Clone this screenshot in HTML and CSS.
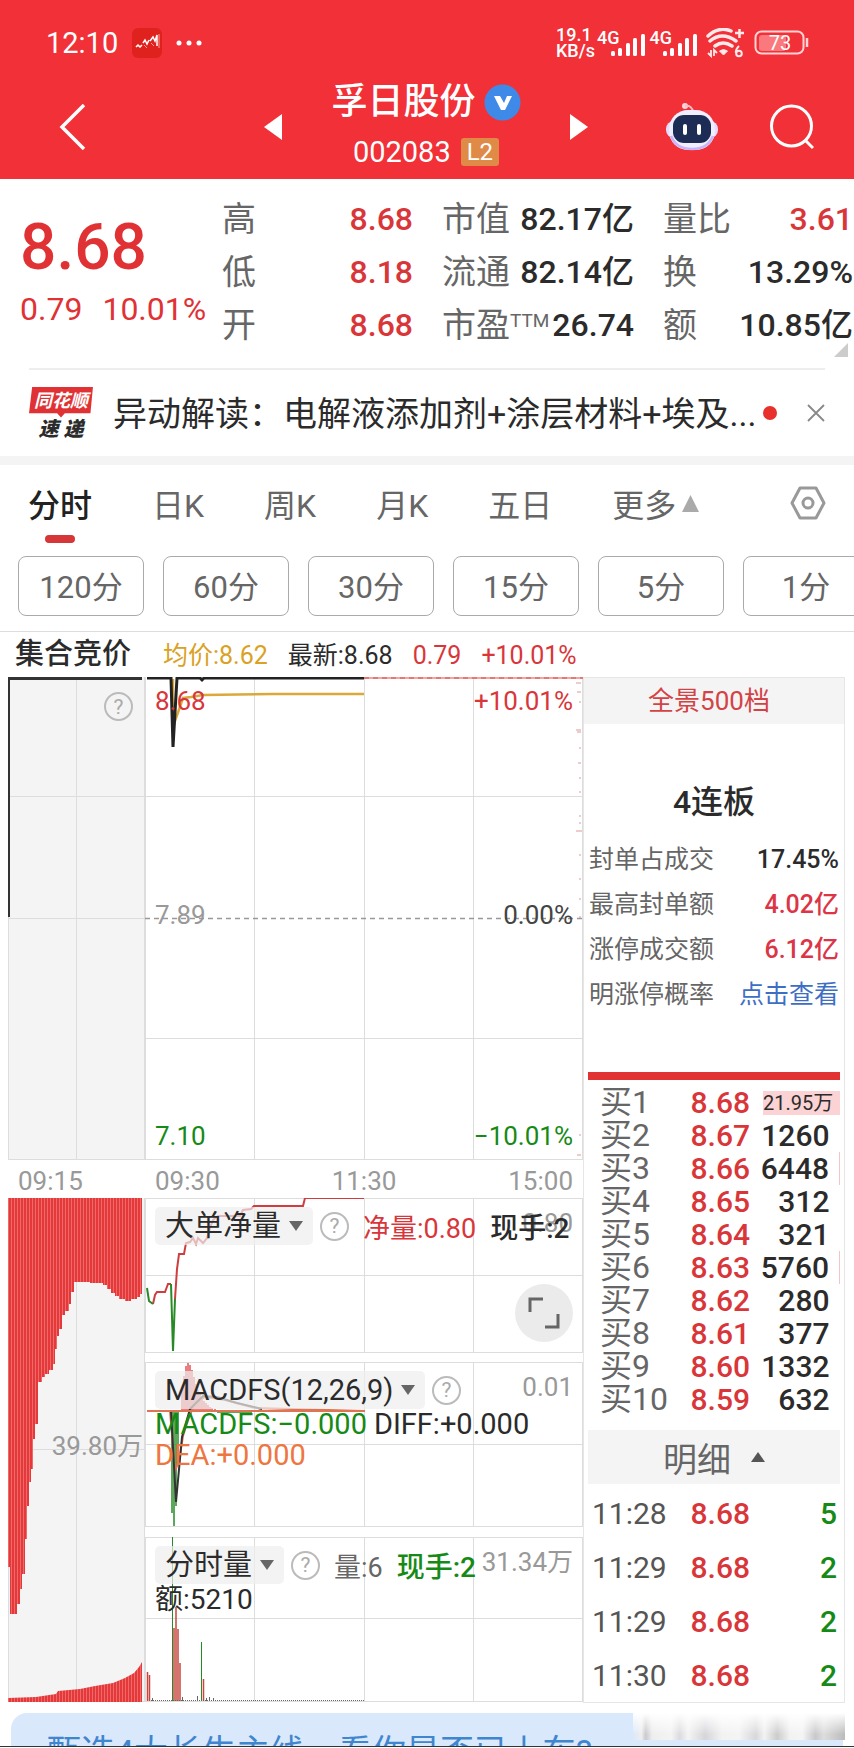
FILE: index.html
```html
<!DOCTYPE html>
<html lang="zh-CN">

<head>
    <meta charset="UTF-8">
    <meta name="viewport" content="width=device-width, initial-scale=1.0">
    <title>孚日股份 002083</title>
    <link rel="stylesheet" href="styles.css">
</head>

<body>
    <header class="top">
        <div class="status">
            <span class="clock">12:10</span>
            <svg class="app" width="30" height="30" viewBox="0 0 30 30">
                <rect width="30" height="30" rx="6" fill="#e0221f" />
                <path d="M4 19l2-2 2 2 2-2M11 15l2-3 2 4 2-4M18 13l3-4 2 4 2-6v11" fill="none" stroke="#fff" stroke-width="1.500" />
                <path d="M12 17l3 3M19 15l3 3M27 6v14" stroke="#ff9d90" stroke-width="1" />
            </svg>
            <svg width="26" height="6" viewBox="0 0 26 6" fill="#fff">
                <circle cx="3" cy="3" r="2.500" />
                <circle cx="13" cy="3" r="2.500" />
                <circle cx="23" cy="3" r="2.500" />
            </svg>
            <div class="status-right">
                <span class="speed">19.1<br>KB/s</span>
                <span class="signal">4G
                    <svg width="35" height="24" viewBox="0 0 35 24" fill="#fff">
                        <rect x="0" y="18" width="4" height="5" rx="1.500" />
                        <rect x="7" y="15" width="4" height="8" rx="1.500" />
                        <rect x="15" y="10" width="4" height="13" rx="1.500" />
                        <rect x="22" y="5" width="4" height="18" rx="1.500" />
                        <rect x="30" y="1" width="4" height="22" rx="1.500" />
                    </svg>
                </span>
                <span class="signal">4G
                    <svg width="35" height="24" viewBox="0 0 35 24" fill="#fff">
                        <rect x="0" y="18" width="4" height="5" rx="1.500" />
                        <rect x="7" y="15" width="4" height="8" rx="1.500" />
                        <rect x="15" y="10" width="4" height="13" rx="1.500" />
                        <rect x="22" y="5" width="4" height="18" rx="1.500" />
                        <rect x="30" y="1" width="4" height="22" rx="1.500" />
                    </svg>
                </span>
                <svg class="wifi" width="38" height="30" viewBox="0 0 38 30" fill="none" stroke="#ffe9ea" stroke-width="3.500">
                    <path d="M2 8Q13-2 25 3M4 13q12-10 26 0M9 18q8-6 17 0" stroke-linecap="round" />
                    <path d="M17.500 27l-4-4q4-3 8 0z" fill="#ffe9ea" stroke-width="1" />
                    <path d="M29 5h9M33.500 1v9" stroke-width="2.500" />
                    <path d="M5 22v6l-3-3M8 28v-6l3 3" stroke-width="1.800" />
                    <path d="M33 18q-4 4-3 7" stroke-width="2" />
                    <circle cx="33" cy="25.500" r="2.800" stroke-width="2" />
                </svg>
                <svg class="battery" width="56" height="26" viewBox="0 0 56 26">
                    <rect x="5" y="5" width="27" height="16" rx="3" fill="#f9797d" />
                    <rect x="1.500" y="1.500" width="48" height="22" rx="6" fill="none" stroke="#ffd3d5" stroke-width="2" />
                    <path d="M53 8v9" stroke="#ffd3d5" stroke-width="2.500" />
                    <text x="26" y="20" text-anchor="middle" font-size="20" fill="#fff">73</text>
                </svg>
            </div>
        </div>
        <nav class="bar">
            <button class="icon" aria-label="返回">
                <svg width="28" height="46" viewBox="0 0 28 46" fill="none" stroke="#fff" stroke-width="3.500">
                    <path d="M26 1L4 23l22 22" />
                </svg>
            </button>
            <button class="icon prev" aria-label="上一只">
                <svg width="18" height="26" viewBox="0 0 18 26" fill="#fff"><path d="M18 0v26L0 13z" /></svg>
            </button>
            <div class="title">
                <h1>孚日股份
                    <svg width="37" height="37" viewBox="0 0 37 37">
                        <circle cx="18.500" cy="18.500" r="18" fill="#3f8ae8" />
                        <path d="M10 12h6l4 7 3-7h5l-7 14h-4z" fill="#fff" />
                    </svg>
                </h1>
                <p>002083 <span class="tag">L2</span></p>
            </div>
            <button class="icon next" aria-label="下一只">
                <svg width="18" height="26" viewBox="0 0 18 26" fill="#fff"><path d="M0 0v26l18-13z" /></svg>
            </button>
            <button class="icon robot" aria-label="智能助手">
                <svg width="52" height="50" viewBox="0 0 52 50">
                    <circle cx="19" cy="4" r="3" fill="#ffd5dc" />
                    <path d="M19 4q7-1 8 6" fill="none" stroke="#ffb9c4" stroke-width="2" />
                    <rect x="0" y="19" width="52" height="17" rx="8" fill="#e3dcff" />
                    <rect x="3" y="8" width="46" height="40" rx="19" fill="#f0eeff" />
                    <path d="M5 34q5 13 21 13t21-13" fill="none" stroke="#c8b5f7" stroke-width="2.500" />
                    <rect x="7" y="13" width="38" height="28" rx="11" fill="#1d2c55" />
                    <rect x="17" y="22" width="4" height="11" rx="2" fill="#fff" />
                    <rect x="31" y="22" width="4" height="11" rx="2" fill="#fff" />
                </svg>
            </button>
            <button class="icon" aria-label="搜索">
                <svg width="44" height="46" viewBox="0 0 44 46" fill="none" stroke="#fff" stroke-width="3">
                    <circle cx="21.500" cy="22" r="20" />
                    <path d="M35 36l8 8" />
                </svg>
            </button>
        </nav>
    </header>

    <section class="quote">
        <div class="price">
            <strong>8.68</strong>
            <p><span>0.79</span><span>10.01%</span></p>
        </div>
        <dl class="stats">
            <div><dt>高</dt><dd class="red">8.68</dd></div>
            <div><dt>低</dt><dd class="red">8.18</dd></div>
            <div><dt>开</dt><dd class="red">8.68</dd></div>
        </dl>
        <dl class="stats">
            <div><dt>市值</dt><dd>82.17亿</dd></div>
            <div><dt>流通</dt><dd>82.14亿</dd></div>
            <div><dt>市盈<sup>TTM</sup></dt><dd>26.74</dd></div>
        </dl>
        <dl class="stats">
            <div><dt>量比</dt><dd class="red">3.61</dd></div>
            <div><dt>换</dt><dd>13.29%</dd></div>
            <div><dt>额</dt><dd>10.85亿</dd></div>
        </dl>
        <svg class="corner" width="14" height="14" viewBox="0 0 14 14"><path d="M14 0v14H0z" fill="#ccc" /></svg>
    </section>

    <section class="notice">
        <div class="brand"><b>同花顺</b><i>速 递</i></div>
        <a href="#">异动解读：电解液添加剂+涂层材料+埃及...</a>
        <span class="dot"></span>
        <button class="icon" aria-label="关闭">
            <svg width="18" height="18" viewBox="0 0 18 18" stroke="#888" stroke-width="1.800"><path d="M1 1l16 16M17 1L1 17" /></svg>
        </button>
    </section>

    <nav class="tabs">
        <button class="active">分时</button>
        <button>日K</button>
        <button>周K</button>
        <button>月K</button>
        <button>五日</button>
        <button>更多<svg width="17" height="17" viewBox="0 0 17 17"><path d="M8.500 0L17 17H0z" fill="#aaa" /></svg></button>
        <button class="setting" aria-label="设置">
            <svg width="36" height="34" viewBox="0 0 36 34" fill="none" stroke="#999" stroke-width="3">
                <path d="M10 2h16l8 15-8 15H10L2 17z" stroke-linejoin="round" />
                <circle cx="18" cy="17" r="5" />
            </svg>
        </button>
    </nav>
    <div class="periods">
        <button>120分</button>
        <button>60分</button>
        <button>30分</button>
        <button>15分</button>
        <button>5分</button>
        <button>1分</button>
    </div>

    <main>
        <div class="summary">
            <b>集合竞价</b>
            <span class="gold">均价:8.62</span>
            <span>最新:8.68</span>
            <span class="red">0.79</span>
            <span class="red">+10.01%</span>
        </div>
        <div class="board">
            <!-- call auction -->
            <div class="auction">
                <div class="plot tall">
                    <svg class="draw" viewBox="0 0 137 483" preserveAspectRatio="none">
                        <path class="grid" d="M.500 0v483M68.500 0v483M136.500 0v483M0 119.500h137M0 241.500h137M0 482.500h137" />
                        <path d="M1 240V1" stroke="#333" stroke-width="2" />
                        <path d="M0 1h134" stroke="#333" stroke-width="4" />
                    </svg>
                    <button class="help" aria-label="说明">?</button>
                </div>
                <div class="times"><span>09:15</span></div>
                <div class="plot deep">
                    <svg class="draw" viewBox="0 0 137 504" preserveAspectRatio="none">
                        <defs>
                            <pattern id="stripe" width="3" height="10" patternUnits="userSpaceOnUse">
                                <rect width="3" height="10" fill="#e4383a" />
                                <rect width="1" height="10" fill="#ee6a68" />
                            </pattern>
                        </defs>
                        <path class="grid" d="M.500 0v504M68.500 0v504M136.500 0v504M0 251.500h137M0 503.500h137" />
                        <path fill="url(#stripe)" d="M0 0H134V96H132V99H129V101H123V103H117V101H111V98H107V95H103V91H99V87H95V85H82V84H66V94H63V106H61V113H57V117H54V131H51V138H49V151H47V166H45V172H41V176H37V179H34V184H30V226H27V241H25V271H23V284H21V308H19V341H17V376H14V391H12V406H9V416H2V369H0z" />
                        <path fill="url(#stripe)" d="M0 504V500L28 499 48 496 50 493 72 491 87 488 105 485 117 480 126 475 131 469 134 464V504z" />
                    </svg>
                    <span class="peak">39.80万</span>
                </div>
            </div>

            <!-- minute charts -->
            <div class="minute">
                <div class="plot tall">
                    <svg class="draw" viewBox="0 0 438 483" preserveAspectRatio="none">
                        <path class="grid" d="M.500 0v483M109.500 0v483M219.500 0v483M328.500 0v483M437.500 0v483M0 119.500h438M0 361.500h438M0 482.500h438" />
                        <path d="M0 241.500h438" stroke="#999" stroke-width="1.500" stroke-dasharray="5 4" />
                        <path d="M219 1h219" stroke="#f3a5a0" stroke-width="2" />
                        <path d="M219 1h219" stroke="#d94a48" stroke-dasharray="5 4" />
                        <path d="M28 2v50l2-8 8-23 8-1 12-2 70-1h91" fill="none" stroke="#dba93a" stroke-width="2.500" />
                        <path d="M2 1h24l2 69 4-69h23l2 2 2-2h160" fill="none" stroke="#222" stroke-width="3" />
                        <path d="M431 6h5M432 15h4M434 25h2M431 53h5M432 55h4M434 71h2M433 86h3M434 101h2M434 115h2M434 139h2M434 146h2M431 154h6M434 178h2M434 202h2M434 222h2M434 240h2M434 458h2M432 478h4" stroke="#d99" />
                    </svg>
                    <div class="axis">
                        <p class="red"><span>8.68</span><span>+10.01%</span></p>
                        <p class="base"><span>7.89</span><span>0.00%</span></p>
                        <p class="green"><span>7.10</span><span>−10.01%</span></p>
                    </div>
                </div>
                <div class="times"><span>09:30</span><span>11:30</span><span>15:00</span></div>

                <div class="plot flow">
                    <svg class="draw" viewBox="0 0 438 155" preserveAspectRatio="none">
                        <path class="grid" d="M.500 0v155M109.500 0v155M219.500 0v155M328.500 0v155M437.500 0v155M0 .500h438M0 77.500h438M0 154.500h438" />
                        <g fill="none" stroke="#cf3d3f" stroke-width="2">
                            <path d="M8 106l2-9 2-3h8l3-8h3M30 101l2-30 2-15h5l2-11 4-1 3-4 3 6 2-6 5 5 4-5 3-10 3-8 5-4h22l3-6 8-1 3-3h49l2-8h59" />
                            <path d="M2 90l2 13 4 3M26 86l2 67 2-52" stroke="#278a27" />
                        </g>
                    </svg>
                    <span class="scale">0.80</span>
                    <div class="line">
                        <label class="pick"><select aria-label="指标"><option>大单净量</option></select></label>
                        <button class="help" aria-label="说明">?</button>
                        <span class="red">净量:0.80</span>
                        <span class="now">现手:2</span>
                    </div>
                    <button class="expand" aria-label="全屏">
                        <svg width="32" height="32" viewBox="0 0 32 32" fill="none" stroke="#666" stroke-width="3"><path d="M2 15V2h13M17 30h13V17" /></svg>
                    </button>
                </div>

                <div class="plot">
                    <svg class="draw" viewBox="0 0 438 165" preserveAspectRatio="none">
                        <path class="grid" d="M.500 0v165M109.500 0v165M219.500 0v165M328.500 0v165M437.500 0v165M0 .500h438M0 82.500h438M0 164.500h438" />
                        <path d="M37 49V26M39 49V14M41 49V4M43 49V1M45 49V3M47 49V8M49 49V15M51 49V22M53 49V28M55 49V32M57 49V35M59 49V39M61 49V41M63 49V43M65 49V45M67 49V46M70 49v-2" stroke="#e25255" stroke-width="1.500" />
                        <path d="M27 49v102M29 49v115M31 49v95M33 49v40M72 50h35" stroke="#278a27" stroke-width="1.500" />
                        <path d="M2 49h23l5 60 4-10 4-25 6-19 6-14 10-6 20 3 30 8 110 3" fill="none" stroke="#df7454" stroke-width="2" />
                        <path d="M26 49l5 91 6-65 8-28 13-13 14 1 20 6 25 6" fill="none" stroke="#333" stroke-width="2" />
                        <path d="M2 49h217" stroke="#df7454" stroke-width="2" />
                    </svg>
                    <span class="scale">0.01</span>
                    <div class="line">
                        <label class="pick"><select aria-label="指标"><option>MACDFS(12,26,9)</option></select></label>
                        <button class="help" aria-label="说明">?</button>
                    </div>
                    <p class="values"><span class="green">MACDFS:−0.000</span> <span>DIFF:+0.000</span> <span class="orange">DEA:+0.000</span></p>
                </div>

                <div class="plot last">
                    <svg class="draw" viewBox="0 0 438 165" preserveAspectRatio="none">
                        <path class="grid" d="M.500 0v165M109.500 0v165M219.500 0v165M328.500 0v165M437.500 0v165M0 .500h438M0 81.500h438M0 164.500h438" />
                        <path d="M2.500 164v-29M4.500 164v-26M29 164V91M31 164V70M33 164V92M35 164v-38M58.500 164v-22" stroke="#c8453f" stroke-width="1.500" />
                        <path d="M27.500 164V0M56.500 164v-59" stroke="#278a27" />
                        <path d="M6 163.500h213" stroke="#666" stroke-dasharray="1 1" />
                        <path d="M7.500 164v-3M37.500 164v-4M52.500 164v-5M61.500 164v-3M64.500 164v-4M68.500 164v-3" stroke="#666" />
                    </svg>
                    <span class="scale">31.34万</span>
                    <div class="line">
                        <label class="pick"><select aria-label="指标"><option>分时量</option></select></label>
                        <button class="help" aria-label="说明">?</button>
                        <span class="grey">量:6</span>
                        <span class="green now">现手:2</span>
                    </div>
                    <p class="values">额:5210</p>
                </div>
            </div>

            <!-- order book -->
            <aside class="side">
                <button class="depth">全景500档</button>
                <div class="limit">
                    <h2>4连板</h2>
                    <dl>
                        <div><dt>封单占成交</dt><dd>17.45%</dd></div>
                        <div><dt>最高封单额</dt><dd class="rose">4.02亿</dd></div>
                        <div><dt>涨停成交额</dt><dd class="rose">6.12亿</dd></div>
                        <div><dt>明涨停概率</dt><dd><a href="#">点击查看</a></dd></div>
                    </dl>
                </div>
                <table class="book">
                    <tr><th>买1</th><td class="red">8.68</td><td class="first"><span>21.95万</span></td></tr>
                    <tr><th>买2</th><td class="red">8.67</td><td>1260</td></tr>
                    <tr><th>买3</th><td class="red">8.66</td><td class="mark">6448</td></tr>
                    <tr><th>买4</th><td class="red">8.65</td><td>312</td></tr>
                    <tr><th>买5</th><td class="red">8.64</td><td>321</td></tr>
                    <tr><th>买6</th><td class="red">8.63</td><td class="mark">5760</td></tr>
                    <tr><th>买7</th><td class="red">8.62</td><td>280</td></tr>
                    <tr><th>买8</th><td class="red">8.61</td><td>377</td></tr>
                    <tr><th>买9</th><td class="red">8.60</td><td>1332</td></tr>
                    <tr><th>买10</th><td class="red">8.59</td><td>632</td></tr>
                </table>
                <button class="detail">明细
                    <svg width="14" height="10" viewBox="0 0 14 10"><path d="M7 0l7 10H0z" fill="#555" /></svg>
                </button>
                <table class="ticks">
                    <tr><th>11:28</th><td class="red">8.68</td><td class="green">5</td></tr>
                    <tr><th>11:29</th><td class="red">8.68</td><td class="green">2</td></tr>
                    <tr><th>11:29</th><td class="red">8.68</td><td class="green">2</td></tr>
                    <tr><th>11:30</th><td class="red">8.68</td><td class="green">2</td></tr>
                </table>
            </aside>
        </div>
    </main>

    <footer class="banner">
        <a href="#">甄选4大长牛主线，看你是否已上车?</a>
        <span class="smudge"></span>
    </footer>
</body>

</html>
```
FILE: styles.css
```css
* {
    box-sizing: border-box;
    margin: 0;
    padding: 0;
}

body {
    font-family: Roboto, "Noto Sans CJK SC", sans-serif;
    color: #2b2b2b;
    background-color: #fff;
    overflow-x: hidden;
}

button,
select {
    font: inherit;
    color: inherit;
    background: none;
    border: none;
    cursor: pointer;
}

a {
    color: inherit;
    text-decoration: none;
}

svg {
    display: block;
}

.red {
    color: #d9363a;
}

.rose {
    color: #dc3546;
}

.green {
    color: #168a16;
}

.gold {
    color: #d9a224;
}

.orange {
    color: #ee7640;
}

.grey {
    color: #666;
}

/* header */
.top {
    color: #fff;
    background-color: #f23037;
    padding: 18px 40px 0 46px;
    height: 179px;
}

.status {
    display: flex;
    align-items: center;
    height: 50px;
    gap: 14px;
    padding-right: 4px;
}

.clock {
    font-size: 29px;
}

.status-right {
    display: flex;
    align-items: center;
    margin-left: auto;
}

.speed {
    font-size: 18px;
    line-height: 16px;
    font-weight: 500;
    margin-right: 2px;
}

.signal {
    display: flex;
    font-size: 18px;
    font-weight: 500;
    line-height: 18px;
    align-items: flex-start;
    margin-right: 4px;
}

.signal svg {
    margin-left: -9px;
    margin-top: 4px;
}

.wifi {
    margin: 0 10px 0 4px;
}

.icon {
    display: flex;
}

.bar {
    display: flex;
    align-items: center;
    height: 118px;
    padding-left: 12px;
}

.prev {
    margin-left: auto;
}

.title {
    width: 288px;
    text-align: center;
}

.title h1 {
    display: flex;
    align-items: center;
    justify-content: center;
    gap: 8px;
    font-size: 36px;
    line-height: 50px;
    font-weight: 500;
}

.title p {
    display: flex;
    align-items: center;
    justify-content: center;
    gap: 10px;
    font-size: 29px;
    line-height: 50px;
}

.tag {
    background-color: #e08a48;
    border-radius: 3px;
    padding: 0 6px;
    font-size: 24px;
    line-height: 28px;
}

.robot {
    margin: 0 52px 0 78px;
}

/* quote */
.quote {
    display: grid;
    grid-template-columns: 202px 191px 221px 1fr;
    position: relative;
    padding: 14px 1px 16px 20px;
    height: 189px;
}

.price {
    color: #e03234;
}

.price strong {
    display: block;
    font-size: 64px;
    line-height: 110px;
    font-weight: 500;
}

.price p {
    display: flex;
    gap: 20px;
    font-size: 32px;
    line-height: 12px;
}

.stats {
    font-size: 32px;
    line-height: 53px;
    font-weight: 500;
}

.stats + .stats {
    padding-left: 29px;
}

.stats div {
    display: flex;
    justify-content: space-between;
    white-space: nowrap;
}

.stats dt {
    color: #666;
    font-size: 34px;
    font-weight: 400;
}

.stats sup {
    font-size: 19px;
    line-height: 19px;
    vertical-align: 10px;
}

.corner {
    position: absolute;
    right: 6px;
    bottom: 11px;
}

/* notice */
.notice {
    display: flex;
    align-items: center;
    height: 88px;
    margin: 0 29px;
    border-top: 2px solid #eee;
    font-size: 34px;
}

.notice a {
    flex: 1;
    white-space: nowrap;
    padding-bottom: 4px;
}

.brand {
    width: 84px;
    text-align: center;
    padding-right: 20px;
}

.brand b {
    display: block;
    color: #fff;
    background-color: #e03235;
    clip-path: polygon(5% 0, 100% 0, 96% 86%, 56% 86%, 50% 100%, 44% 86%, 0 86%);
    padding-bottom: 4px;
    font-size: 18px;
    line-height: 27px;
    font-style: italic;
}

.brand i {
    display: block;
    font-size: 20px;
    line-height: 22px;
    font-weight: 900;
}

.dot {
    width: 14px;
    height: 14px;
    border-radius: 50%;
    background-color: #e8302c;
    margin-right: 30px;
}

/* tabs */
.tabs {
    display: flex;
    align-items: flex-start;
    border-top: 9px solid #f4f4f4;
    height: 100px;
    padding: 0 28px;
    gap: 60px;
    font-size: 32px;
    color: #666;
}

.tabs button {
    display: flex;
    align-items: center;
    gap: 6px;
    height: 78px;
    padding-bottom: 2px;
    white-space: nowrap;
}

.tabs .active {
    position: relative;
    color: #222;
    font-weight: 500;
}

.tabs .active::after {
    content: "";
    position: absolute;
    left: 50%;
    bottom: 0;
    width: 30px;
    height: 8px;
    margin-left: -15px;
    border-radius: 4px;
    background-color: #d63638;
}

.tabs .setting {
    margin-left: auto;
}

.periods {
    display: flex;
    gap: 19px;
    padding: 0 0 15px 18px;
    overflow: hidden;
    border-bottom: 1px solid #ddd;
}

.periods button {
    flex: 0 0 126px;
    height: 60px;
    padding-bottom: 4px;
    border: 1px solid #aaa;
    border-radius: 8px;
    font-size: 31px;
    color: #666;
}

/* charts */
.summary {
    display: flex;
    align-items: baseline;
    gap: 20px;
    height: 45px;
    padding-left: 15px;
    font-size: 25px;
    line-height: 44px;
}

.summary b {
    width: 128px;
    font-size: 29px;
    font-weight: 500;
}

.board {
    display: grid;
    grid-template-columns: 137fr 438fr 262fr;
    padding: 0 9px 0 8px;
}

.plot {
    position: relative;
    height: 165px;
    margin-bottom: 10px;
    padding: 9px 10px;
}

.tall {
    height: 483px;
    margin-bottom: 0;
}

.flow {
    height: 155px;
    margin-bottom: 9px;
}

.deep {
    height: 504px;
    margin-bottom: 0;
}

.last {
    margin-bottom: 0;
}

.auction .plot {
    background-color: #f4f4f4;
}

.draw {
    position: absolute;
    left: 0;
    top: 0;
    width: 100%;
    height: 100%;
}

.grid {
    fill: none;
    stroke: #ddd;
}

.auction .help {
    position: relative;
    margin: 6px 2px 0 auto;
}

.help {
    display: block;
    width: 29px;
    height: 29px;
    flex: none;
    border: 2px solid #bbb;
    border-radius: 50%;
    font-size: 21px;
    line-height: 24px;
    color: #aaa;
}

.times {
    display: flex;
    justify-content: space-between;
    height: 38px;
    padding: 0 10px;
    font-size: 26px;
    line-height: 42px;
    color: #999;
}

.peak {
    position: absolute;
    right: 2px;
    top: 50%;
    margin-top: -20px;
    font-size: 26px;
    line-height: 32px;
    color: #999;
}

.axis {
    position: relative;
    display: flex;
    flex-direction: column;
    justify-content: space-between;
    height: 100%;
    font-size: 26px;
    line-height: 30px;
}

.axis p {
    display: flex;
    justify-content: space-between;
}

.base {
    padding-bottom: 8px;
    color: #444;
}

.base span:first-child {
    color: #999;
}

.scale {
    position: absolute;
    right: 10px;
    top: 9px;
    font-size: 26px;
    line-height: 32px;
    color: #999;
}

.line {
    position: relative;
    display: flex;
    align-items: center;
    gap: 14px;
    height: 38px;
    font-size: 27px;
    white-space: nowrap;
}

.pick {
    display: flex;
    align-items: center;
    height: 38px;
    padding: 0 10px;
    margin-right: -7px;
    border-radius: 5px;
    background-color: rgba(238, 238, 238, 0.7);
}

.pick select {
    appearance: none;
    font-size: 29px;
    line-height: 38px;
    height: 38px;
}

.pick::after {
    content: "";
    margin-left: 7px;
    border: 7px solid transparent;
    border-top: 10px solid #666;
    border-bottom: 0;
}

.now {
    font-size: 28px;
    font-weight: 500;
}

.values {
    position: relative;
    font-size: 28px;
    line-height: 31px;
}

.values span {
    font-size: 29px;
}

.expand {
    position: absolute;
    right: 10px;
    bottom: 11px;
    width: 58px;
    height: 58px;
    border-radius: 50%;
    background-color: #ebebeb;
}

.expand svg {
    margin: auto;
}

/* order book */
.side {
    display: flex;
    flex-direction: column;
    border: 1px solid #e6e6e6;
    padding: 0 4px;
}

.depth {
    margin: 0 -4px;
    padding: 0 10px 6px 0;
    height: 46px;
    background-color: #f4f4f4;
    font-size: 26px;
    color: #d34346;
}

.limit {
    height: 357px;
    margin-top: -1px;
    padding: 54px 1px 0;
    border-bottom: 8px solid #e13333;
    font-size: 25px;
}

.limit h2 {
    font-size: 32px;
    line-height: 50px;
    font-weight: 500;
    text-align: center;
    margin-bottom: 10px;
}

.limit dl div {
    display: flex;
    justify-content: space-between;
    line-height: 45px;
}

.limit dt {
    color: #666;
}

.limit dd {
    font-weight: 500;
}

.limit a {
    color: #3e6ec4;
    font-weight: 400;
}

table {
    width: 100%;
    table-layout: fixed;
    border-collapse: collapse;
    font-size: 30px;
}

th {
    width: 94px;
    font-weight: 400;
    text-align: left;
    color: #555;
}

td {
    font-weight: 500;
    text-align: right;
}

td:nth-child(2) {
    width: 68px;
}

.book {
    margin: 6px 0 14px;
}

.book tr {
    height: 33px;
    line-height: 33px;
}

.book th {
    padding-left: 12px;
    font-size: 32px;
    white-space: nowrap;
    color: #666;
}

.book td:last-child {
    padding-right: 10px;
}

.book .first:last-child {
    padding-left: 13px;
    padding-right: 0;
}

.first span {
    display: block;
    padding-right: 9px;
    font-size: 20px;
    line-height: 24px;
    font-weight: 400;
    white-space: nowrap;
    background-color: #fbd3d4;
}

.book .mark {
    border-right: 1px solid #f5c4c6;
}

.detail {
    display: flex;
    align-items: center;
    justify-content: center;
    gap: 20px;
    height: 54px;
    background-color: #f4f4f4;
    font-size: 34px;
    color: #666;
}

.ticks {
    margin-top: 2px;
}

.ticks tr {
    height: 54px;
}

.ticks th {
    padding-left: 4px;
}

.ticks td:last-child {
    padding-right: 3px;
}

/* banner */
.banner {
    position: relative;
    height: 34px;
    margin-top: 10px;
    padding: 14px 47px 0;
    overflow: hidden;
    border-bottom: 1px solid #333;
    font-size: 34px;
    line-height: 50px;
    color: #3f86cf;
    white-space: nowrap;
}

.banner::before {
    content: "";
    position: absolute;
    left: 11px;
    right: 11px;
    top: 0;
    height: 60px;
    border-radius: 16px;
    background-color: #d9e8fb;
}

.banner a {
    position: relative;
}

.smudge {
    position: absolute;
    right: 9px;
    top: 0;
    width: 212px;
    height: 27px;
    background: linear-gradient(#fff, rgba(255, 255, 255, 0) 80%), linear-gradient(90deg, #d9e8fb, #eee 4%, #c9c9cf 6%, #eee 9%, #f4f4f4 18%, #dcdce0 22%, #f4f4f4 26%, #d6d6da 34%, #f2f2f2 42%, #f4f4f4 50%, #d8d8dc 58%, #f2f2f2 62%, #ccc 68%, #f2f2f2 74%, #f4f4f4 80%, #c9c9cc 86%, #ddd 90%, #bbb 100%);
}
```
